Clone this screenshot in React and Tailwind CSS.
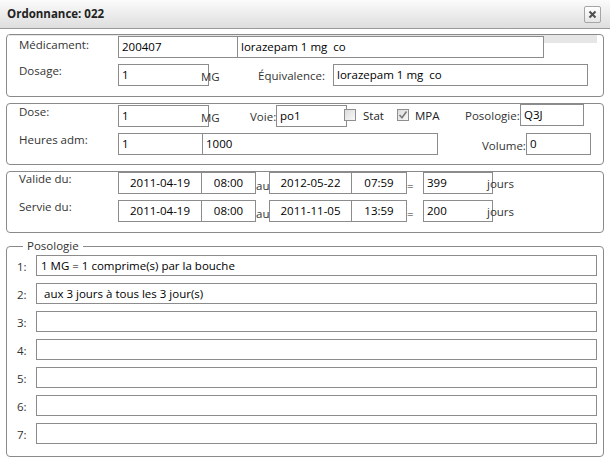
import React from "react";

const Box = ({ className = "", h = "h-[22px]", children }) => (
  <div
    className={`flex ${h} items-center border border-[#8c8c8c] bg-white px-[3px] text-black ${className}`}
  >
    {children}
  </div>
);

const Label = ({ className = "", children }) => (
  <div className={`self-start whitespace-nowrap pt-[1px] text-[#333] ${className}`}>{children}</div>
);

const Check = ({ checked }) => (
  <div className="flex h-[12px] w-[12px] items-center justify-center border border-[#8f8f8f] bg-gradient-to-br from-[#dcdcdc] to-[#f8f8f8]">
    {checked && (
      <svg width="10" height="10" viewBox="0 0 10 10">
        <path d="M1.5 5 L4 7.8 L8.5 1.5" fill="none" stroke="#7a7a7a" strokeWidth="1.6" />
      </svg>
    )}
  </div>
);

const Section = ({ className = "", children }) => (
  <div className={`relative rounded-[4px] border border-[#8a8a8a] bg-white ${className}`}>
    {children}
  </div>
);

const DateRow = ({ label, d1, t1, d2, t2, days }) => (
  <div className="flex items-center">
    <Label className="w-[99px]">{label}</Label>
    <Box className="w-[84px] justify-center">{d1}</Box>
    <Box className="-ml-px w-[55px] justify-center">{t1}</Box>
    <div className="w-[13px] pt-[6px] text-[#333]">au</div>
    <Box className="w-[83px] justify-center">{d2}</Box>
    <Box className="-ml-px w-[56px] justify-center">{t2}</Box>
    <div className="w-[16px] pt-[5px] text-[#333]">=</div>
    <Box className="w-[70px]">{days}</Box>
    <div className="-ml-[6px] pt-[2px] text-[#333]">jours</div>
  </div>
);

export default function App() {
  const poso = [
    "1 MG = 1 comprime(s) par la bouche",
    " aux 3 jours à tous les 3 jour(s)",
    "",
    "",
    "",
    "",
    "",
  ];

  return (
    <div
      className="h-[463px] w-[610px] overflow-hidden bg-white text-[11.5px] leading-none"
      style={{ fontFamily: '"Open Sans", "Noto Sans", sans-serif' }}
    >
      {/* title bar */}
      <div className="flex h-[29px] items-center justify-between border-b border-[#9a9a9a] bg-gradient-to-b from-[#fbfbfb] to-[#dedede] pl-[7px] pr-[9px]">
        <div className="text-[11.5px] font-bold text-[#222]">Ordonnance: 022</div>
        <div className="flex h-[17px] w-[17px] items-center justify-center rounded-[2px] border border-[#a5a5a5] bg-gradient-to-b from-white to-[#e6e6e6]">
          <svg width="9" height="9" viewBox="0 0 9 9">
            <path d="M1.5 1.5 L7.5 7.5 M7.5 1.5 L1.5 7.5" stroke="#505050" strokeWidth="2" />
          </svg>
        </div>
      </div>

      <div className="flex flex-col px-[6px] pt-[5px]">
        {/* médicament */}
        <Section className="pb-[10px] pl-[12px] pt-[1px]">
          <div className="absolute left-[1px] right-[6px] top-0 h-[8px] bg-[#e6e6e6]" />
          <div className="relative flex items-center">
            <div className="-ml-[11px] h-[22px] w-[110px] self-start bg-white pl-[11px] pt-[3px] text-[#333]">
              Médicament:
            </div>
            <Box className="w-[120px] border-[#1f2bd6]">200407</Box>
            <Box className="w-[306px] border-l-0">lorazepam 1 mg&nbsp; co</Box>
          </div>
          <div className="mt-[6px] flex items-center">
            <Label className="w-[99px]">Dosage:</Label>
            <Box className="w-[91px]">1</Box>
            <div className="-ml-[8px] w-[57px] pt-[3px] text-[#333]">MG</div>
            <div className="w-[75px] pt-[2px] text-[#333]">Équivalence:</div>
            <Box className="w-[255px]">lorazepam 1 mg&nbsp; co</Box>
          </div>
        </Section>

        {/* dose */}
        <Section className="mt-[6px] pb-[9px] pl-[12px] pt-[1px]">
          <div className="flex items-center">
            <Label className="w-[99px]">Dose:</Label>
            <Box className="w-[91px]">1</Box>
            <div className="-ml-[8px] w-[49px] pt-[3px] text-[#333]">MG</div>
            <div className="w-[26px] pt-[2px] text-[#333]">Voie:</div>
            <Box className="w-[71px]">po1</Box>
            <div className="-ml-[3px] -mt-[3px]">
              <Check />
            </div>
            <div className="ml-[7px] w-[34px] text-[#222]">Stat</div>
            <div className="-mt-[3px]">
              <Check checked />
            </div>
            <div className="ml-[6px] w-[50px] text-[#222]">MPA</div>
            <div className="w-[55px] whitespace-nowrap text-[#333]">Posologie:</div>
            <Box className="-mt-[2px] w-[64px]">Q3J</Box>
          </div>
          <div className="mt-[6px] flex items-center">
            <Label className="w-[99px]">Heures adm:</Label>
            <Box className="w-[85px]">1</Box>
            <Box className="-ml-px w-[236px]">1000</Box>
            <div className="ml-[44px] w-[44px] pt-[3px] text-[#333]">Volume:</div>
            <Box className="w-[65px]">0</Box>
          </div>
        </Section>

        {/* dates */}
        <Section className="mt-[6px] pb-[10px] pl-[12px] pt-0">
          <DateRow
            label="Valide du:"
            d1="2011-04-19"
            t1="08:00"
            d2="2012-05-22"
            t2="07:59"
            days="399"
          />
          <div className="mt-[6px]">
            <DateRow
              label="Servie du:"
              d1="2011-04-19"
              t1="08:00"
              d2="2011-11-05"
              t2="13:59"
              days="200"
            />
          </div>
        </Section>

        {/* posologie */}
        <fieldset className="mt-[5px] rounded-[4px] border border-[#8a8a8a] pb-[12px] pt-[1px]">
          <legend className="ml-[16px] px-[4px] text-[11.5px] leading-[16px] text-[#333]">
            Posologie
          </legend>
          <div className="flex flex-col gap-[7px]">
            {poso.map((p, i) => (
              <div key={i} className="flex h-[21px] items-center">
                <div className="w-[29px] pl-[10px] pt-[2px] text-[#333]">{i + 1}:</div>
                <Box h="h-[21px]" className="w-[561px] whitespace-pre pl-[4px]">
                  {p}
                </Box>
              </div>
            ))}
          </div>
        </fieldset>
      </div>
    </div>
  );
}
